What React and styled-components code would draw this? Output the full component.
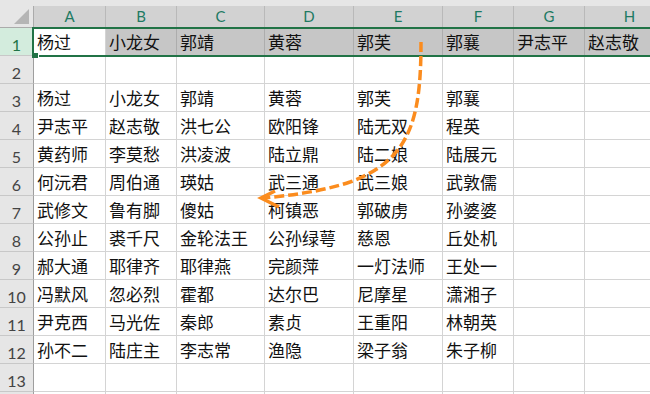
import React from "react";
import styled, { createGlobalStyle } from "styled-components";

const GlobalStyle = createGlobalStyle`
  html, body { margin: 0; padding: 0; background: #ffffff; }
  body { font-family: "Noto Sans CJK SC", "Noto Sans", sans-serif; }
`;

const GREEN = "#217346";
const COLS = ["A", "B", "C", "D", "E", "F", "G", "H"];

const ROWS = [
  ["杨过", "小龙女", "郭靖", "黄蓉", "郭芙", "郭襄", "尹志平", "赵志敬"],
  [],
  ["杨过", "小龙女", "郭靖", "黄蓉", "郭芙", "郭襄"],
  ["尹志平", "赵志敬", "洪七公", "欧阳锋", "陆无双", "程英"],
  ["黄药师", "李莫愁", "洪凌波", "陆立鼎", "陆二娘", "陆展元"],
  ["何沅君", "周伯通", "瑛姑", "武三通", "武三娘", "武敦儒"],
  ["武修文", "鲁有脚", "傻姑", "柯镇恶", "郭破虏", "孙婆婆"],
  ["公孙止", "裘千尺", "金轮法王", "公孙绿萼", "慈恩", "丘处机"],
  ["郝大通", "耶律齐", "耶律燕", "完颜萍", "一灯法师", "王处一"],
  ["冯默风", "忽必烈", "霍都", "达尔巴", "尼摩星", "潇湘子"],
  ["尹克西", "马光佐", "秦郎", "素贞", "王重阳", "林朝英"],
  ["孙不二", "陆庄主", "李志常", "渔隐", "梁子翁", "朱子柳"],
  [],
  [],
];

const Sheet = styled.div`
  position: relative;
  width: 650px;
  height: 394px;
  overflow: hidden;
  background: #ffffff;
`;

const TopStrip = styled.div`
  height: 6px;
  background: #e6e6e6;
`;

const Grid = styled.div`
  display: grid;
  grid-template-columns: 34px 72px 71px 88px 89px 89px 71px 71px 90px;
  grid-template-rows: 22px;
  grid-auto-rows: 28px;
`;

const Corner = styled.div`
  box-sizing: border-box;
  background: #e6e6e6;
  border-right: 1px solid #ababab;
  border-bottom: 1px solid #ababab;
  display: flex;
  align-items: flex-end;
  justify-content: flex-end;
  padding: 0 3px 2px 0;
`;

const ColHead = styled.div`
  box-sizing: border-box;
  background: #d2d2d2;
  border-right: 1px solid #b9b9b9;
  border-bottom: 1px solid #ababab;
  color: #1e7a63;
  font-family: Lato, "Liberation Sans", sans-serif;
  font-size: 15px;
  line-height: 1;
  display: flex;
  align-items: flex-end;
  justify-content: center;
  padding-bottom: 3px;
`;

const RowHead = styled.div`
  box-sizing: border-box;
  background: ${(p) => (p.$active ? "#d3ecdd" : "#e6e6e6")};
  color: ${(p) => (p.$active ? GREEN : "#444444")};
  border-right: 1px solid #9e9e9e;
  border-bottom: 1px solid #c8c8c8;
  font-family: Lato, "Liberation Sans", sans-serif;
  font-size: 16px;
  line-height: 1;
  display: flex;
  align-items: flex-end;
  justify-content: center;
  padding-bottom: 2px;
`;

const Cell = styled.div`
  box-sizing: border-box;
  background: ${(p) => (p.$selected ? "#c6c6c6" : "#ffffff")};
  border-right: 1px solid ${(p) => (p.$selected ? "#adadad" : "#d4d4d4")};
  border-bottom: 1px solid #d4d4d4;
  color: #111111;
  font-family: "Noto Sans CJK SC", "Noto Sans", sans-serif;
  font-size: 17px;
  line-height: 1;
  display: flex;
  align-items: center;
  padding-left: 3px;
  white-space: nowrap;
  overflow: hidden;
`;

const Selection = styled.div`
  position: absolute;
  left: 32px;
  top: 27px;
  width: 660px;
  height: 30px;
  box-sizing: border-box;
  border: 2px solid ${GREEN};
  pointer-events: none;
`;

const FillHandle = styled.div`
  position: absolute;
  left: 32px;
  top: 53px;
  width: 6px;
  height: 5px;
  background: ${GREEN};
  box-shadow: 1px 0 0 #ffffff;
`;

const Overlay = styled.svg`
  position: absolute;
  left: 0;
  top: 0;
  pointer-events: none;
`;

export default function App() {
  return (
    <Sheet>
      <GlobalStyle />
      <TopStrip />
      <Grid>
        <Corner>
          <svg width="16" height="16" viewBox="0 0 16 16">
            <polygon points="15,0 15,15 0,15" fill="#b5b5b5" />
          </svg>
        </Corner>
        {COLS.map((c) => (
          <ColHead key={c}>{c}</ColHead>
        ))}
        {ROWS.map((row, r) => (
          <React.Fragment key={r}>
            <RowHead $active={r === 0}>{r < 13 ? r + 1 : ""}</RowHead>
            {COLS.map((c, i) => (
              <Cell key={c} $selected={r === 0 && i > 0}>
                {row[i] || ""}
              </Cell>
            ))}
          </React.Fragment>
        ))}
      </Grid>
      <Selection />
      <FillHandle />
      <Overlay width="650" height="394" viewBox="0 0 650 394">
        <path
          d="M421,42 C421,120 410,160 350,182 C320,192 292,195 264,198"
          fill="none"
          stroke="#fb8c1e"
          strokeWidth="3.5"
          strokeDasharray="10 4"
        />
        <polyline
          points="275,191 261,198 279,207"
          fill="none"
          stroke="#fb8c1e"
          strokeWidth="3.5"
          strokeLinejoin="miter"
        />
      </Overlay>
    </Sheet>
  );
}
